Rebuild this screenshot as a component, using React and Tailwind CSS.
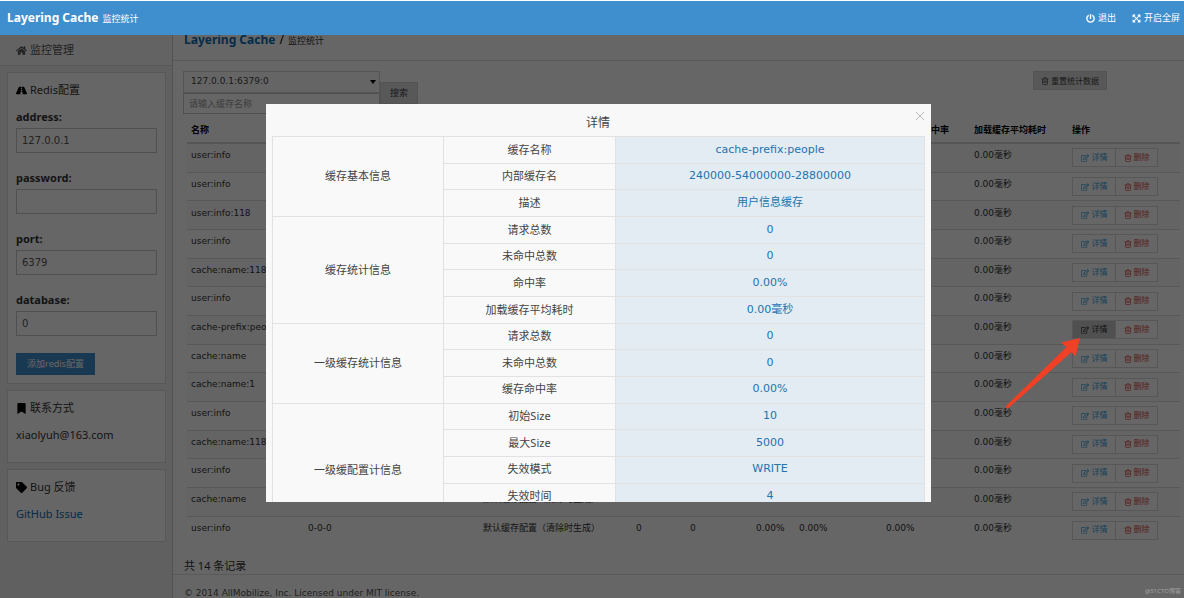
import { useState } from "react";
import {
  FaBookmark,
  FaExpandArrowsAlt,
  FaHome,
  FaPowerOff,
  FaRegEdit,
  FaRoad,
  FaTag,
} from "react-icons/fa";

const redisFields = [
  { name: "address", value: "127.0.0.1" },
  { name: "password", value: "" },
  { name: "port", value: "6379" },
  { name: "database", value: "0" },
];

const columns = [
  { title: "名称", width: "w-[117px]" },
  { title: "内部缓存名", width: "w-[175px]" },
  { title: "描述", width: "w-[153px]" },
  { title: "请求总数", width: "w-[54px]" },
  { title: "未命中总数", width: "w-[66px]" },
  { title: "命中率", width: "w-[43px]" },
  { title: "一级缓存命中率", width: "w-[87px]" },
  { title: "二级缓存命中率", width: "w-[88px]" },
  { title: "加载缓存平均耗时", width: "w-[98px]" },
  { title: "操作", width: "w-[112px]" },
];

const cacheNames = [
  "user:info",
  "user:info",
  "user:info:118",
  "user:info",
  "cache:name:118",
  "user:info",
  "cache-prefix:people",
  "cache:name",
  "cache:name:1",
  "user:info",
  "cache:name:118",
  "user:info",
  "cache:name",
  "user:info",
];

const details = [
  {
    group: "缓存基本信息",
    rows: [
      ["缓存名称", "cache-prefix:people"],
      ["内部缓存名", "240000-54000000-28800000"],
      ["描述", "用户信息缓存"],
    ],
  },
  {
    group: "缓存统计信息",
    rows: [
      ["请求总数", "0"],
      ["未命中总数", "0"],
      ["命中率", "0.00%"],
      ["加载缓存平均耗时", "0.00毫秒"],
    ],
  },
  {
    group: "一级缓存统计信息",
    rows: [
      ["请求总数", "0"],
      ["未命中总数", "0"],
      ["缓存命中率", "0.00%"],
    ],
  },
  {
    group: "一级缓配置计信息",
    rows: [
      ["初始Size", "10"],
      ["最大Size", "5000"],
      ["失效模式", "WRITE"],
      ["失效时间", "4"],
      ["时间单位", "MINUTES"],
    ],
  },
];

function TrashIcon() {
  return (
    <svg viewBox="0 0 16 16" className="size-2" fill="none" stroke="currentColor" strokeWidth="1.5">
      <path d="M1 4h14M5 4l1-2.500h4L11 4M3 4v9.500q0 1.500 1.500 1.500h7q1.500 0 1.500-1.500V4M6 7v5M8 7v5M10 7v5" />
    </svg>
  );
}

function Header() {
  return (
    <header className="relative z-20 flex h-[35px] shrink-0 items-center justify-between border-t border-white bg-[#3f8fce] pr-1 pl-[7px] text-white">
      <h1 className="flex items-baseline gap-1">
        <strong className="text-[12px]">Layering Cache</strong>
        <small className="text-[9px]">监控统计</small>
      </h1>
      <nav className="flex gap-4 text-[9px]">
        <a href="#logout" className="flex items-center gap-[3px]">
          <FaPowerOff />
          退出
        </a>
        <a href="#fullscreen" className="flex items-center gap-[3px]">
          <FaExpandArrowsAlt />
          开启全屏
        </a>
      </nav>
    </header>
  );
}

function Card({ icon, title, className, children }) {
  return (
    <section className={`mr-[6px] ml-[7px] border border-[#dcdcdc] bg-white px-2 pt-2 ${className}`}>
      <h2 className="flex h-[18px] items-center gap-[3px]">
        {icon}
        {title}
      </h2>
      {children}
    </section>
  );
}

function Sidebar() {
  return (
    <aside className="w-[173px] shrink-0 border-r border-[#d0d0d0] bg-[#f0f0f0] text-[11px] text-[#333]">
      <a href="#monitor" className="flex h-[31px] items-center gap-[3px] border-b border-[#dcdcdc] bg-[#f8f8f8] pl-4 text-[#555]">
        <FaHome />
        监控管理
      </a>
      <Card icon={<FaRoad className="text-black" />} title="Redis配置" className="mt-[6px] pb-2">
        <form>
          {redisFields.map((field) => (
            <div key={field.name} className="mb-[9px] h-[52px] pt-2">
              <label htmlFor={field.name} className="block h-5 leading-5 font-bold">
                {field.name}:
              </label>
              <input
                id={field.name}
                defaultValue={field.value}
                className="mt-[1px] block h-[25px] w-full border border-[#c8c8c8] px-[5px] font-['DejaVu_Sans',sans-serif] text-[10px] text-[#555]"
              />
            </div>
          ))}
          <button type="button" className="mt-[10px] h-[22px] w-[79px] bg-[#3f8fce] text-[9px] text-white">
            添加redis配置
          </button>
        </form>
      </Card>
      <Card icon={<FaBookmark className="text-black" />} title="联系方式" className="mt-[6px] h-[73px]">
        <p className="mt-[9px] leading-[18px]">xiaolyuh@163.com</p>
      </Card>
      <Card icon={<FaTag className="text-black" />} title="Bug 反馈" className="mt-[6px] h-[73px]">
        <a href="#issue" className="mt-[9px] block leading-[18px] text-[#0e6eb8]">
          GitHub Issue
        </a>
      </Card>
    </aside>
  );
}

function SearchBar() {
  return (
    <div className="flex items-start justify-between pt-[10px] pr-[77px] pl-[10px]">
      <form className="flex items-center">
        <div className="w-[197px]">
          <div className="relative">
            <select
              aria-label="redis"
              className="block h-[22px] w-full appearance-none border border-[#d4d4d4] bg-[#fcfcfc] px-[7px] font-['DejaVu_Sans','Noto_Sans_CJK_SC',sans-serif] text-[9px] text-[#444]"
            >
              <option>127.0.0.1:6379:0</option>
            </select>
            <span className="pointer-events-none absolute top-[9px] right-1 border-x-[3px] border-t-4 border-x-transparent border-t-black" />
          </div>
          <input
            aria-label="缓存名称"
            placeholder="请输入缓存名称"
            className="block h-[21px] w-full border border-[#c8c8c8] px-[5px] text-[9px] placeholder:text-[#999]"
          />
        </div>
        <button type="button" className="h-[22px] w-[38px] border border-[#d0d0d0] bg-[#dcdcdc] text-[9px] text-[#444]">
          搜索
        </button>
      </form>
      <button
        type="button"
        className="flex h-[19px] w-[74px] items-center justify-center gap-[2px] border border-[#d0d0d0] bg-[#dcdcdc] text-[8px] text-[#444]"
      >
        <TrashIcon />
        重置统计数据
      </button>
    </div>
  );
}

function CacheTable({ active, onSelect }) {
  return (
    <table className="mt-[2px] ml-[14px] h-[428px] w-[calc(100%-18px)] table-fixed border-collapse text-left font-['DejaVu_Sans','Noto_Sans_CJK_SC',sans-serif] text-[9px] whitespace-nowrap text-[#333]">
      <thead>
        <tr className="h-[27px] border-b-2 border-[#d4d4d4] text-black">
          {columns.map((column) => (
            <th key={column.title} className={`pt-[3px] pl-1 ${column.width}`}>
              {column.title}
            </th>
          ))}
        </tr>
      </thead>
      <tbody>
        {cacheNames.map((name, index) => (
          <tr key={index} className="border-t border-[#dcdcdc] odd:bg-[#f9f9f9]">
            <td className="pb-1 pl-1">{name}</td>
            <td className="pb-1 pl-1">0-0-0</td>
            <td className="pb-1 pl-1">默认缓存配置（清除时生成）</td>
            <td className="pb-1 pl-1">0</td>
            <td className="pb-1 pl-1">0</td>
            <td className="pb-1 pl-1">0.00%</td>
            <td className="pb-1 pl-1">0.00%</td>
            <td className="pb-1 pl-1">0.00%</td>
            <td className="pb-1 pl-1">0.00毫秒</td>
            <td className="pl-1">
              <div className="flex h-[19px] w-[86px] border border-[#dadada] text-[8px]">
                <button
                  type="button"
                  onClick={() => onSelect(index)}
                  className={`flex w-[43px] items-center justify-center gap-[3px] border-r border-[#dadada] ${
                    index === active ? "bg-[#c8c8c8] text-[#333]" : "bg-white text-[#3ba4dc]"
                  }`}
                >
                  <FaRegEdit />
                  详情
                </button>
                <button type="button" className="flex flex-1 items-center justify-center gap-[2px] bg-white text-[#dd514c]">
                  <TrashIcon />
                  删除
                </button>
              </div>
            </td>
          </tr>
        ))}
      </tbody>
    </table>
  );
}

function DetailDialog({ onClose }) {
  return (
    <div role="dialog" aria-label="详情" className="relative h-[398px] flex-1 overflow-hidden bg-[#f8f8f8] pr-[7px] pl-[6px] text-center text-[11px] text-[#444]">
      <h2 className="h-8 pt-2 text-[12px] leading-[21px]">详情</h2>
      <button type="button" aria-label="关闭" onClick={onClose} className="absolute top-[7px] right-[6px] text-[#bbb]">
        <svg viewBox="0 0 10 10" className="size-[10px]" stroke="currentColor">
          <path d="M1 1l8 8M9 1l-8 8" />
        </svg>
      </button>
      <table className="h-[401px] w-full table-fixed border-collapse">
        <tbody>
          {details.map(({ group, rows }) =>
            rows.map(([label, value], index) => (
              <tr key={group + label}>
                {index === 0 && (
                  <td rowSpan={rows.length} className="w-[171px] border border-[#e2e2e2] bg-[#f9f9f9]">
                    {group}
                  </td>
                )}
                <td className="w-[172px] border border-[#e2e2e2] bg-[#f9f9f9]">{label}</td>
                <td className="w-[309px] border border-[#e2e2e2] bg-[#e3ebf3] font-['DejaVu_Sans','Noto_Sans_CJK_SC',sans-serif] text-[#2474ad]">
                  {value}
                </td>
              </tr>
            ))
          )}
        </tbody>
      </table>
    </div>
  );
}

export default function App() {
  const [active, setActive] = useState(6);

  return (
    <div className="relative flex h-screen flex-col overflow-hidden bg-white font-['Noto_Sans','Noto_Sans_CJK_SC',sans-serif]">
      <Header />
      <div className="flex min-h-0 flex-1">
        <Sidebar />
        <main className="min-w-0 flex-1">
          <div className="flex h-[26px] items-start gap-1 border-b border-[#e0e0e0] pl-[11px] text-[12px] leading-[10px]">
            <a href="#home" className="font-bold text-[#0e6eb8]">
              Layering Cache
            </a>
            <span>/</span>
            <small className="text-[9px] leading-[12px] text-[#333]">监控统计</small>
          </div>
          <SearchBar />
          <CacheTable active={active} onSelect={setActive} />
          <p className="mt-[13px] pl-[11px] text-[11px] leading-[17px] text-[#333]">共 14 条记录</p>
          <footer className="border-t border-[#e0e0e0] pt-[9px] pl-[11px] font-['DejaVu_Sans',sans-serif] text-[9px] leading-[18px] text-[#555]">
            © 2014 AllMobilize, Inc. Licensed under MIT license.
          </footer>
        </main>
      </div>

      {active !== null && (
        <div className="absolute inset-x-0 top-[35px] bottom-0 z-10 flex items-start bg-black/60 pt-[69px] pr-[253px] pl-[266px]">
          <DetailDialog onClose={() => setActive(null)} />
        </div>
      )}

      <svg viewBox="0 0 76 74" className="pointer-events-none absolute top-[336px] right-[103px] z-20 h-[74px] w-[76px]" fill="#f04025">
        <path d="M75 2L56 6.500L61.500 11L1 70Q0 73 3 72.500L66.500 16L70.500 20.500Z" />
      </svg>
      <span className="absolute right-[3px] bottom-0 z-20 text-[6px] leading-[13px] text-white/40">@51CTO博客</span>
    </div>
  );
}
